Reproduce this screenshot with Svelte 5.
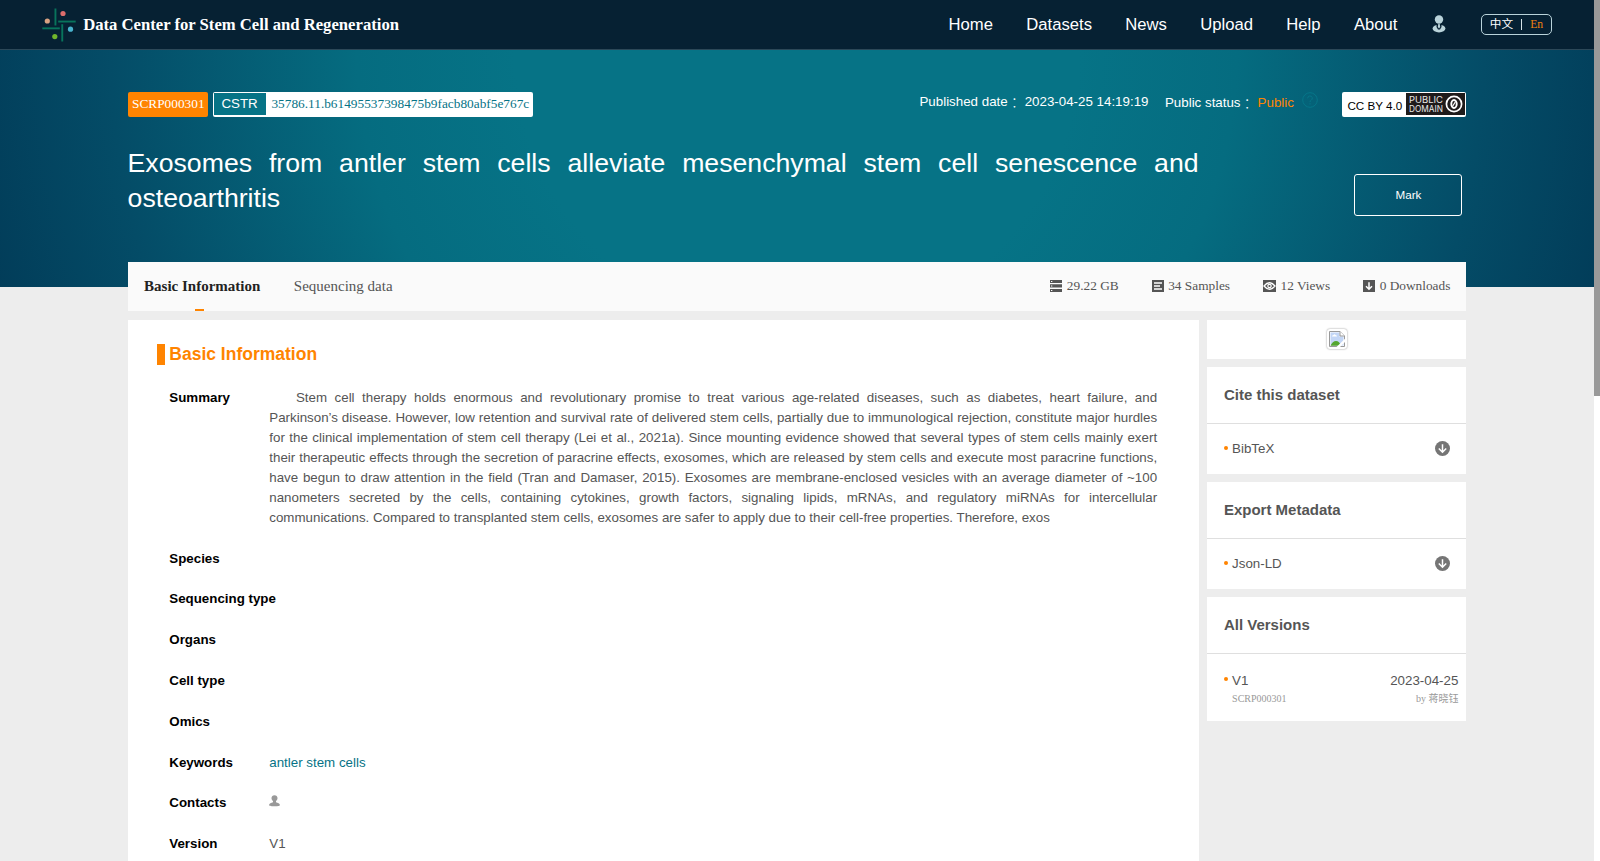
<script lang="ts">
  const nav = ['Home', 'Datasets', 'News', 'Upload', 'Help', 'About'];

  const stats = [
    { icon: 'storage', text: '29.22 GB' },
    { icon: 'samples', text: '34 Samples' },
    { icon: 'views', text: '12 Views' },
    { icon: 'downloads', text: '0 Downloads' },
  ];

  const emptyFields = ['Species', 'Sequencing type', 'Organs', 'Cell type', 'Omics'];

  const exportCards = [
    { title: 'Cite this dataset', format: 'BibTeX' },
    { title: 'Export Metadata', format: 'Json-LD' },
  ];

  const version = { name: 'V1', date: '2023-04-25', id: 'SCRP000301', author: '蒋晓钰' };

  const summary =
    'Stem cell therapy holds enormous and revolutionary promise to treat various age-related diseases, such as diabetes, heart failure, and Parkinson’s disease. However, low retention and survival rate of delivered stem cells, partially due to immunological rejection, constitute major hurdles for the clinical implementation of stem cell therapy (Lei et al., 2021a). Since mounting evidence showed that several types of stem cells mainly exert their therapeutic effects through the secretion of paracrine effects, exosomes, which are released by stem cells and execute most paracrine functions, have begun to draw attention in the field (Tran and Damaser, 2015). Exosomes are membrane-enclosed vesicles with an average diameter of ~100 nanometers secreted by the cells, containing cytokines, growth factors, signaling lipids, mRNAs, and regulatory miRNAs for intercellular communications. Compared to transplanted stem cells, exosomes are safer to apply due to their cell-free properties. Therefore, exos';
</script>

<div class="window">
  <div class="page">
    <header class="topbar">
      <svg class="logo" width="34" height="34" viewBox="0 0 34 34">
        <g fill="#08745c">
          <rect x="12.5" y="0.5" width="1.9" height="17" />
          <rect x="16.2" y="12.6" width="17.5" height="1.9" />
          <rect x="19.3" y="16.2" width="1.9" height="17.3" />
          <rect x="0.3" y="19.4" width="17.5" height="1.9" />
        </g>
        <circle cx="5.3" cy="13" r="2.6" fill="#d9a282" />
        <circle cx="21" cy="5.5" r="2.6" fill="#dc6d6c" />
        <circle cx="28.5" cy="21.2" r="2.6" fill="#49b4cf" />
        <circle cx="12.8" cy="28.6" r="2.6" fill="#70b52c" />
      </svg>
      <span class="brand">Data Center for Stem Cell and Regeneration</span>
      <nav class="nav">
        {#each nav as item}
          <a href="#top">{item}</a>
        {/each}
      </nav>
      <svg class="user" width="14" height="18" viewBox="0 0 14 18">
        <ellipse cx="7" cy="13.6" rx="6.4" ry="3.9" fill="#b9d3da" />
        <path d="M4.5 8h5v4L8 14.4H6L4.5 12z" fill="#062133" />
        <path d="M6.3 9h1.4l.5 3L7 13.5 5.800 12z" fill="#b9d3da" />
        <circle cx="7" cy="4.5" r="4.2" fill="#b9d3da" />
      </svg>
      <div class="lang">
        <span>中文</span><span class="sep"></span><span class="on">En</span>
      </div>
    </header>

    <section class="hero">
      <div class="wrap">
        <div class="meta">
          <span class="tag">SCRP000301</span>
          <span class="cstr"><b>CSTR</b><i>35786.11.b61495537398475b9facb80abf5e767c</i></span>
          <span class="published">Published date<span class="colon">：</span> 2023-04-25 14:19:19</span>
          <span class="status">Public status<span class="colon">：</span> <em>Public</em></span>
          <svg class="help" width="16" height="16" viewBox="0 0 16 16" fill="none" stroke="#067689">
            <circle cx="8" cy="8" r="7.3" />
            <path d="M5.7 6.3a2.3 2.3 0 1 1 3.4 2c-.8.5-1.1.9-1.1 1.8M8 11.2v1.3" />
          </svg>
          <span class="licence">
            CC BY 4.0
            <svg width="59" height="22" viewBox="0 0 59 22">
              <rect width="59" height="22" fill="#1f1b1b" />
              <g fill="#e8e8e8" font-family="Inter, 'Liberation Sans', sans-serif" font-size="8.6">
                <text x="3" y="9.8" textLength="34" lengthAdjust="spacingAndGlyphs">PUBLIC</text>
                <text x="3" y="18.8" textLength="34" lengthAdjust="spacingAndGlyphs">DOMAIN</text>
              </g>
              <circle cx="48" cy="11" r="7.6" fill="none" stroke="#fff" stroke-width="1.7" />
              <ellipse cx="48" cy="11" rx="2.7" ry="4" fill="none" stroke="#fff" stroke-width="1.9" />
              <path d="M46.5 13.5l3-5" stroke="#fff" stroke-width="1.2" />
            </svg>
          </span>
        </div>
        <div class="headline">
          <h1>Exosomes from antler stem cells alleviate mesenchymal stem cell senescence and osteoarthritis</h1>
          <button class="mark">Mark</button>
        </div>
      </div>
    </section>

    <div class="wrap body">
      <div class="tabs">
        <span class="tab active">Basic Information</span>
        <span class="tab">Sequencing data</span>
        <div class="stats">
          {#each stats as s}
            {@const w = s.icon === 'views' ? 13 : 12}
            <span class="stat">
              <svg width={w} height="12" viewBox="0 0 {w} 12">
                {#if s.icon === 'storage'}
                  <path d="M0 0h12v3H0zM0 4.3h12v3.3H0zM0 9h12v3H0z" fill="#555" />
                  <path d="M1 1h1.3v1H1zM1 5.5h1.3v1H1zM1 10h1.3v1H1z" fill="#fff" />
                {:else if s.icon === 'samples'}
                  <rect width="12" height="12" fill="#555" />
                  <path d="M2 2.9h8M2 6h6M2 9.1h8" stroke="#fff" stroke-width="1.5" />
                {:else if s.icon === 'views'}
                  <rect width="13" height="12" fill="#555" />
                  <path d="M1 6q5.5-6.5 11 0q-5.5 6.5-11 0z" fill="none" stroke="#fff" stroke-width="1.3" />
                  <circle cx="6.5" cy="6" r="1.7" fill="none" stroke="#fff" stroke-width="1.2" />
                {:else}
                  <rect width="12" height="12" fill="#555" />
                  <path d="M6 2.3v6.5M3 6.2l3 3 3-3" fill="none" stroke="#fff" stroke-width="1.5" />
                {/if}
              </svg>
              <span>{s.text}</span>
            </span>
          {/each}
        </div>
      </div>

      <div class="columns">
        <main class="main">
          <h2>Basic Information</h2>
          <div class="row summary">
            <span class="label">Summary</span>
            <p>{summary}</p>
          </div>
          {#each emptyFields as field}
            <div class="row"><span class="label">{field}</span></div>
          {/each}
          <div class="row"><span class="label">Keywords</span><a href="#keywords">antler stem cells</a></div>
          <div class="row">
            <span class="label">Contacts</span>
            <svg class="contact" width="11" height="12" viewBox="0 0 11 12" fill="#999">
              <path d="M5.5 0.3c1.8 0 3 1.2 3 2.7 0 1.3-.6 2.4-1.5 3v1.2c1.8.4 3.9 1.3 3.900 2.800 0 .9-1 1.200-5.400 1.200S.1 10.900.1 10c0-1.500 2.100-2.400 3.900-2.800V6c-.9-.6-1.500-1.700-1.500-3C2.500 1.500 3.700.3 5.500.3z" />
            </svg>
          </div>
          <div class="row"><span class="label">Version</span><span>V1</span></div>
        </main>

        <aside class="side">
          <div class="card cover">
            <div class="thumb">
              <!-- missing image placeholder -->
              <svg width="16" height="16" viewBox="0 0 16 16">
                <path d="M0.5 0.5h10.5l4.5 4.5v10.5h-15z" fill="#fff" stroke="#999" />
                <path d="M1.5 1.5h9v4h4v9h-13z" fill="#c3d6f6" />
                <path d="M3 5.5q0-1.5 1.5-1.5q1-1.5 2 0q1.5 0 1.5 1.5z" fill="#fff" />
                <path d="M1.5 14.8q2-4.8 5.5-4.8q3.5 0 5 4.8z" fill="#55a630" />
                <path d="M11 .5v4.5h4.500" fill="#fff" stroke="#999" />
                <path d="M7.5 16L16 7.8v3.2L11 16z" fill="#fff" />
              </svg>
            </div>
          </div>

          {#each exportCards as c}
            <div class="card">
              <h3>{c.title}</h3>
              <div class="entry">
                <span class="dot"></span><span>{c.format}</span>
                <svg class="download" width="15" height="15" viewBox="0 0 15 15">
                  <circle cx="7.5" cy="7.5" r="7.5" fill="#757575" />
                  <path d="M7.5 3.3v7.5M3.8 7.5l3.7 3.7 3.7-3.7" fill="none" stroke="#fff" stroke-width="1.5" />
                </svg>
              </div>
            </div>
          {/each}

          <div class="card">
            <h3>All Versions</h3>
            <div class="version">
              <div class="line">
                <span class="dot"></span><span>{version.name}</span>
                <span class="right">{version.date}</span>
              </div>
              <div class="line small">
                <span>{version.id}</span>
                <span class="right">by {version.author}</span>
              </div>
            </div>
          </div>
        </aside>
      </div>
    </div>
  </div>
  <div class="scrollbar"><div class="handle"></div></div>
</div>

<style>
  :global(body) { margin: 0; overflow: hidden; }
  .window { display: flex; width: 1600px; height: 861px; overflow: hidden; font: 13.33px/20px "Liberation Sans", "Noto Sans CJK SC", sans-serif; color: #555; }
  .page { width: 1594px; height: 861px; overflow: hidden; background: #ededed; }
  .scrollbar { width: 6px; background: #fff; }
  .handle { height: 396px; background: #999; }
  a { text-decoration: none; }

  .topbar { display: flex; align-items: center; height: 49px; padding-left: 41.5px; box-sizing: content-box; background: #062133; border-bottom: 1px solid #2c4858; color: #fff; }
  .logo { flex: none; }
  .brand { margin-left: 7.7px; font: bold 16.67px/20px "Liberation Serif", serif; }
  .nav { display: flex; gap: 33.3px; margin-left: auto; font-size: 16.67px; }
  .nav a { color: #fff; }
  .user { margin: 0 0 1px 34.6px; }
  .lang { display: flex; align-items: center; justify-content: center; box-sizing: border-box; width: 71px; height: 21px; margin: 0 42px 0 35px; border: 1px solid #b9d3da; border-radius: 5px; font: 11.67px/18px "Liberation Serif", "Noto Sans CJK SC", serif; }
  .sep { width: 1px; height: 11px; margin: 0 8px; background: #d5e2e6; }
  .on { color: #f08010; }

  .hero { height: 237px; background: radial-gradient(circle 880px at 50% 0, #067386 0, #067386 32%, #056c80 50%, #044c67 78%, #013855 100%); color: #fff; }
  .wrap { width: 1338.8px; margin: 0 auto; }
  .meta { display: flex; align-items: flex-start; height: 25px; padding-top: 42px; }
  .tag, .cstr i { font: 13.33px/24px "Liberation Serif", serif; }
  .tag { box-sizing: border-box; width: 80px; height: 25px; padding-left: 4.4px; border-radius: 2px; background: #ff8400; }
  .cstr { display: flex; box-sizing: border-box; width: 320px; height: 25px; margin-left: 5px; padding: 1px; border-radius: 2px; background: #fff; }
  .cstr b { width: 52px; height: 22px; background: #067386; font-weight: normal; line-height: 21px; text-align: center; }
  .cstr i { margin-left: 5.8px; line-height: 22px; color: #067386; }
  .published { margin-left: auto; }
  .colon { font-family: "Noto Sans CJK TC", sans-serif; font-weight: 300; line-height: 0; vertical-align: -1.5px; }
  .status { margin: 1px 8px 0 16.5px; }
  .status em { font-style: normal; color: #ff8400; }
  .licence { display: flex; justify-content: space-between; box-sizing: border-box; width: 124.5px; height: 25px; margin-left: 24px; padding: 1px 1px 2px 5.5px; border-radius: 2px; background: #fff; color: #000; font-size: 11.67px; line-height: 26px; }
  .headline { display: flex; justify-content: space-between; padding-top: 29px; }
  h1 { width: 1071px; margin: 0; font-size: 26.67px; font-weight: normal; line-height: 35px; text-align: justify; }
  .mark { width: 108px; height: 42px; margin: 28px 4px 0 0; padding-bottom: 3px; border: 1px solid #fff; border-radius: 3px; background: none; color: #fff; font: 11.67px "Liberation Sans", sans-serif; }

  .body { margin-top: -25px; position: relative; }
  .tabs { display: flex; height: 49px; padding: 0 16px 0 16.5px; background: #fafafa; font: 15px/48px "Liberation Serif", serif; }
  .tab { margin-right: 33.5px; }
  .tab.active { display: flex; flex-direction: column; font-weight: bold; color: #222; }
  .tab.active::after { content: ''; width: 9px; height: 2px; margin: -1px 0 0 51px; background: #ff8400; }
  .stats { display: flex; gap: 33.1px; margin-left: auto; font-size: 13.33px; }
  .stat { display: flex; align-items: center; height: 47px; gap: 4.4px; line-height: 47px; }

  .columns { display: flex; justify-content: space-between; margin-top: 9px; }
  .main { box-sizing: border-box; width: 1071.5px; height: 560px; padding: 24px 42px 0 41.7px; background: #fff; }
  h2 { margin: 0 0 23px -12px; padding-left: 4px; border-left: 8px solid #ff8400; color: #ff8400; font-size: 17.5px; line-height: 21px; }
  .row { display: flex; height: 20px; margin-bottom: 20.81px; }
  .summary { height: 139.8px; }
  .label { flex: none; width: 100px; font-weight: bold; color: #000; white-space: nowrap; }
  .row p { margin: 0; text-align: justify; text-indent: 2em; }
  .row a { color: #067386; }
  .contact { margin-top: 2px; }

  .side { display: flex; flex-direction: column; gap: 8px; width: 259px; }
  .card { background: #fff; }
  .cover { display: flex; justify-content: center; height: 39px; }
  .thumb { box-sizing: border-box; width: 20px; height: 20px; margin-top: 9px; padding: 2px; border-radius: 3px; box-shadow: 0 0 2px #888; display: flex; }
  h3 { margin: 0; padding: 0 16.5px; border-bottom: 1px solid #dfdfdf; font-size: 15px; line-height: 56px; }
  .entry { display: flex; align-items: center; height: 50px; padding: 0 16px 0 16.7px; }
  .dot { width: 4px; height: 4px; margin: -3px 4px 0 0; border-radius: 50%; background: #ff8400; }
  .download { margin: -1px 0 0 auto; }
  .version { height: 67px; padding: 0 8px 0 16.7px; }
  .version .dot { margin-top: -4px; }
  .line { display: flex; align-items: center; height: 20px; padding-top: 17px; }
  .right { margin-left: auto; }
  .small { height: 16px; padding: 0 0 0 8px; color: #999; font: 10px/16px "Liberation Serif", "Noto Sans CJK SC", serif; }
</style>
